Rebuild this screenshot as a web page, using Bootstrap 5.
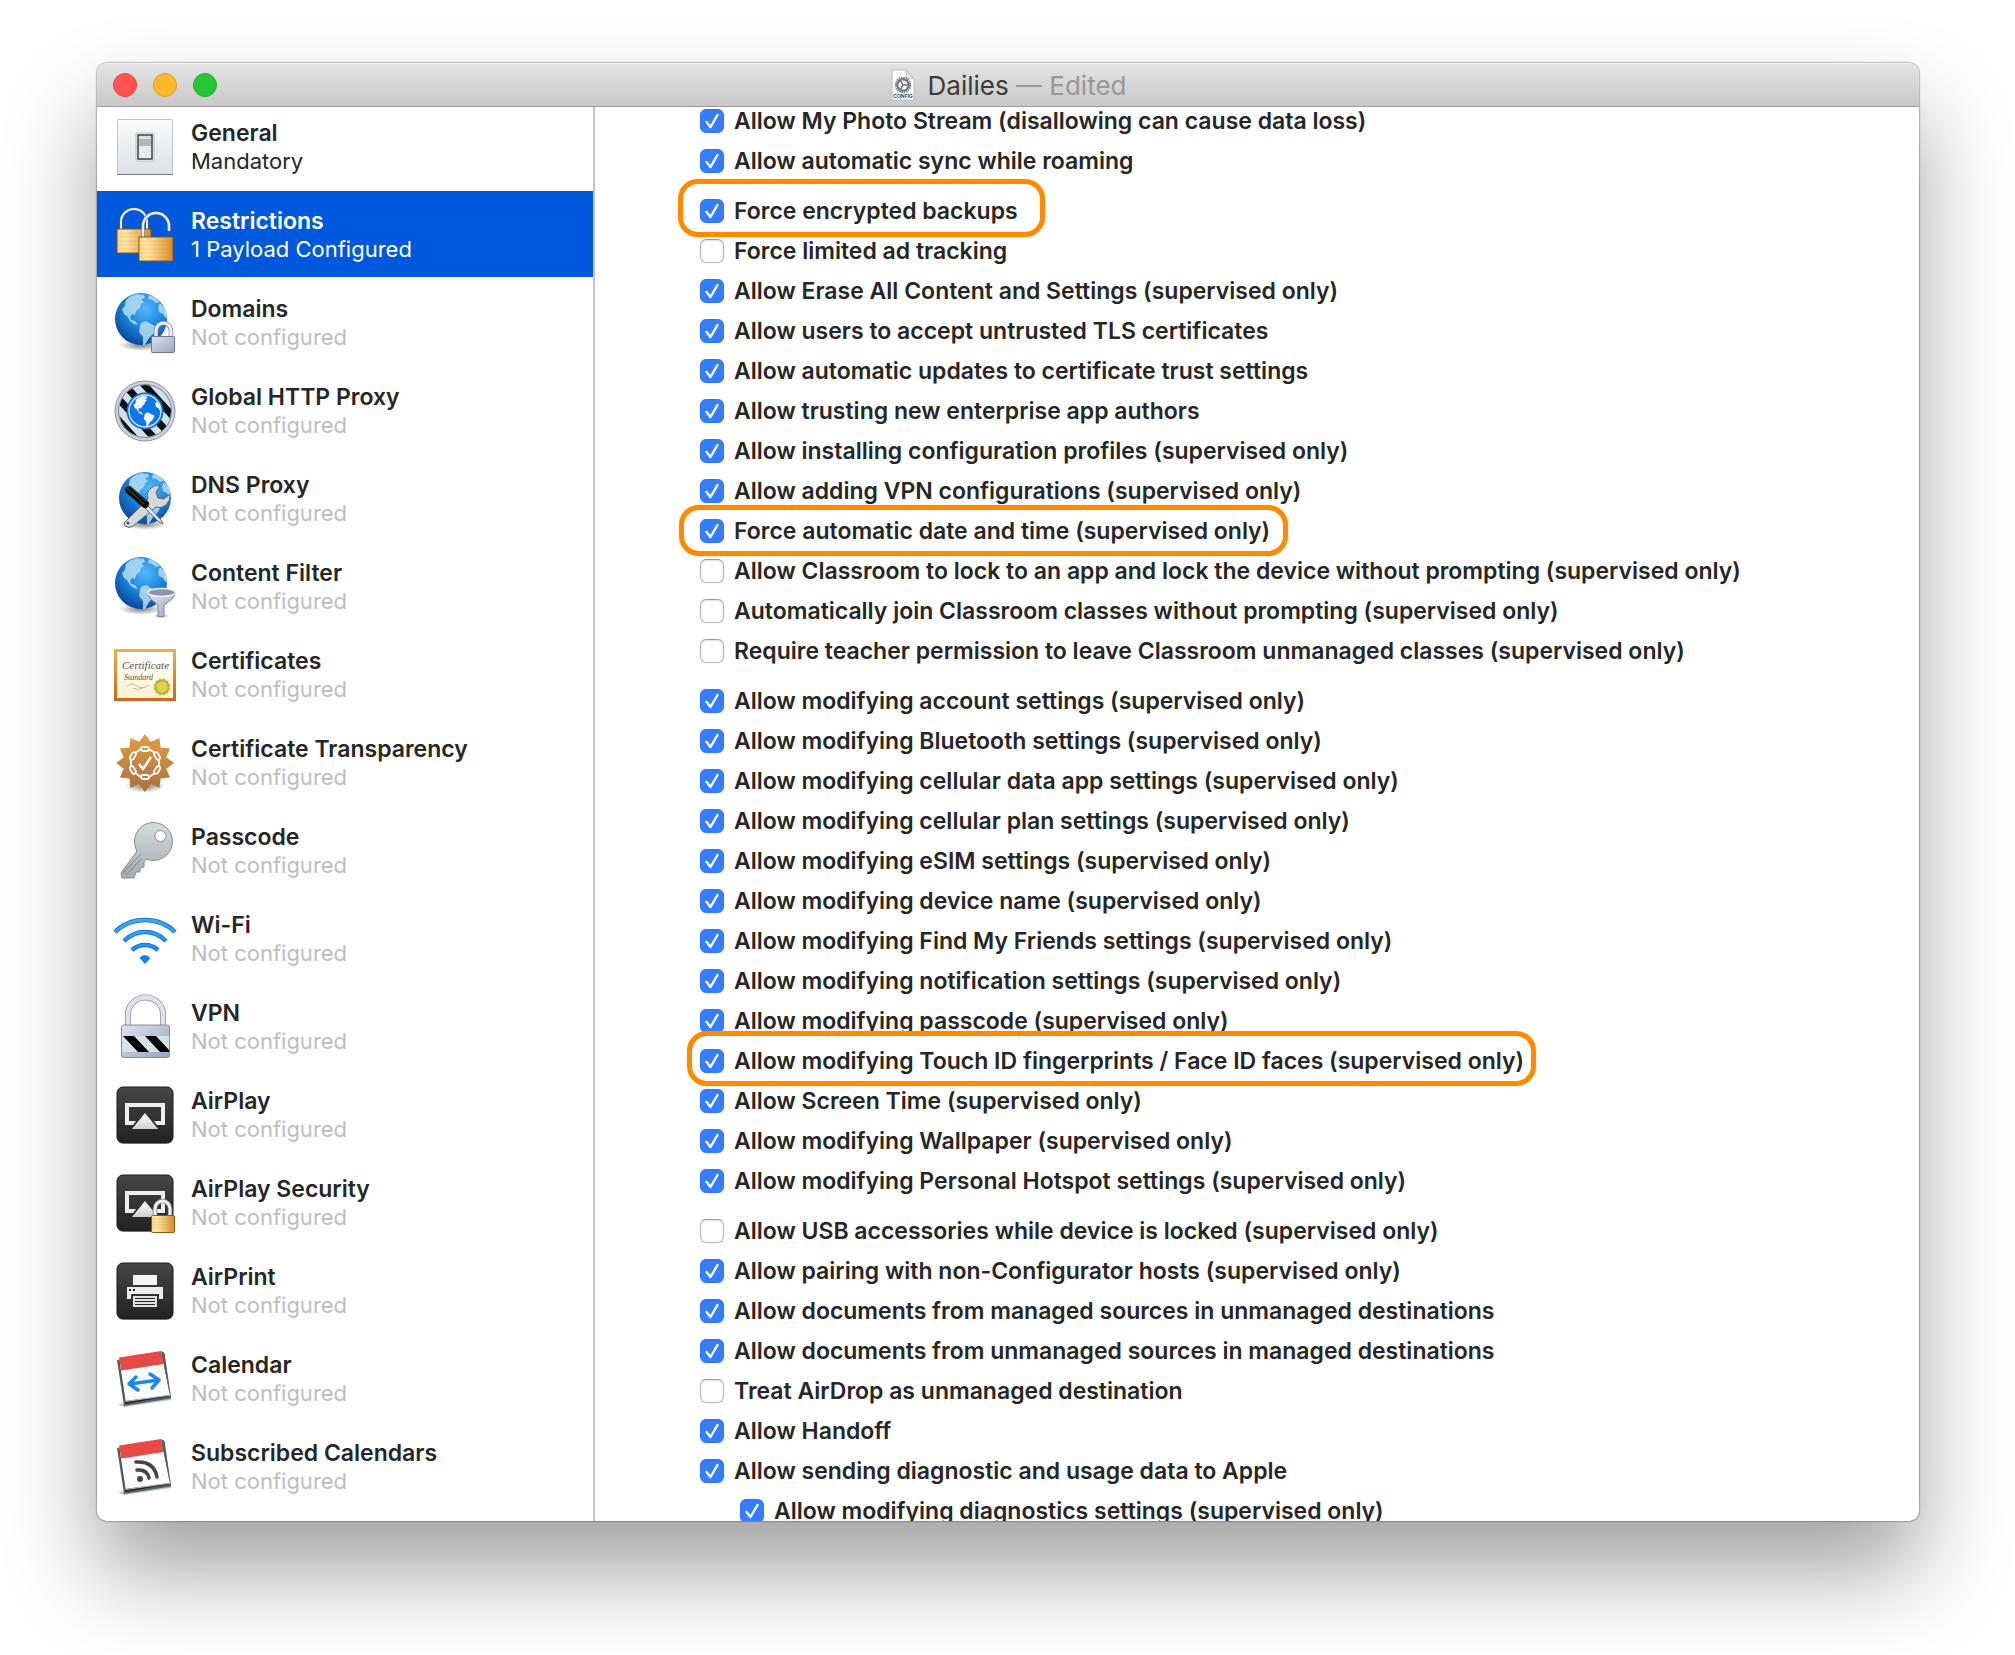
<!DOCTYPE html>
<html lang="en">
<head>
<meta charset="utf-8">
<meta name="viewport" content="width=device-width, initial-scale=1">
<title>Dailies — Edited</title>
<link href="https://cdn.jsdelivr.net/npm/bootstrap@5.3.0/dist/css/bootstrap.min.css" rel="stylesheet">
<style>
  body { font-family: Inter, "Liberation Sans", sans-serif; font-size: 22px; line-height: 28px; color: #262626; background: #fff; padding: 63px 96px 134px 97px; }
  .mac-window { border-radius: 10px; background: #fff; box-shadow: 0 0 1px 1px rgba(0,0,0,.24), 0 50px 90px rgba(0,0,0,.37); }
  .titlebar { height: 44px; background: linear-gradient(#e4e4e4, #c9c9c9); border-bottom: 1px solid #9a9a9a; box-shadow: inset 0 1px #f4f4f4; padding: 0 16px; font-size: 26px; }
  .lights { flex: 1 1 0; gap: 16px; }
  .light { width: 24px; height: 24px; border-radius: 50%; border: 1px solid; padding: 0; }
  .light-close { background: #ff544f; border-color: #e2443f; }
  .light-min { background: #fdb72b; border-color: #df9d20; }
  .light-zoom { background: #27c636; border-color: #1dad2b; }
  .doc-title { gap: 10px; }
  .doc-name { padding-top: 2px; color: #3b3b3b; }
  .doc-state { color: #979797; }
  .sidebar { width: 498px; border-right: 2px solid #c3c3c3; }
  .payloads { margin-top: -4px; gap: 2px; }
  .payload { height: 86px; gap: 14px; padding: 0 16px; color: #262626; text-decoration: none; }
  .payload svg { width: 64px; height: 64px; flex: none; }
  .payload span { padding-top: 2px; }
  .payload small { display: block; font-size: 22px; color: #bdbdbd; }
  .payload b { display: block; font-size: 23px; font-weight: 600; }
  .payload.required small { color: #262626; }
  .payload.current { background: #0058dc; color: #fff; }
  .payload.current small { color: #fff; }
  .options { margin-top: -6px; padding-left: 105px; font-size: 23px; }
  .options li { height: 40px; display: flex; }
  .options .new-group { margin-top: 10px; }
  .options .nested { padding-left: 40px; }
  .options label { position: relative; display: flex; align-items: center; gap: 10px; height: 40px; font-weight: 600; white-space: nowrap; }
  .options .form-check-input { width: 24px; height: 24px; margin: 0; border: 1px solid #b4b4b4; border-top-color: #989898; border-radius: 6px; box-shadow: inset 0 1px 2px rgba(0,0,0,.12); }
  .options .form-check-input:checked { border-color: #2f76f6; background-color: #367dfd; box-shadow: none; background-size: 24px 24px; background-image: url("data:image/svg+xml,%3Csvg xmlns='http://www.w3.org/2000/svg' viewBox='0 0 24 24'%3E%3Cpath d='M6.500 13l4 5L17.500 6' fill='none' stroke='%23fff' stroke-width='2.400' stroke-linecap='round' stroke-linejoin='round'/%3E%3C/svg%3E"); }
  .ringed::after { content: ""; position: absolute; inset: -6px -18px -5px -21px; border: 5px solid #ff8a00; border-radius: 20px; box-shadow: 0 0 1px #ff8a00; pointer-events: none; }
  .ring-tall::after { inset: -12px -27px -6px -22px; }
  .ring-low::after { inset: -10px -12px -5px -13px; }
</style>
<script src="https://cdn.jsdelivr.net/npm/bootstrap@5.3.0/dist/js/bootstrap.bundle.min.js"></script>
</head>
<body class="vh-100 d-flex flex-column overflow-hidden">

<!-- Shared gradients and icon parts -->
<svg width="0" height="0" class="position-absolute" aria-hidden="true">
  <defs>
    <radialGradient id="sea" cx=".58" cy=".3" r=".75"><stop offset="0" stop-color="#55b8fb"/><stop offset=".5" stop-color="#1d84e0"/><stop offset="1" stop-color="#06428f"/></radialGradient>
    <linearGradient id="gold"><stop offset="0" stop-color="#ffd98a"/><stop offset=".25" stop-color="#ffe9a6"/><stop offset="1" stop-color="#dc8a28"/></linearGradient>
    <linearGradient id="steel" x2="1" y2="1"><stop offset="0" stop-color="#dfe4ee"/><stop offset="1" stop-color="#98a4bc"/></linearGradient>
    <linearGradient id="plate" x2="0" y2="1"><stop offset="0" stop-color="#fbfbfd"/><stop offset="1" stop-color="#dde0e5"/></linearGradient>
    <linearGradient id="dark" x2="0" y2="1"><stop offset="0" stop-color="#464646"/><stop offset="1" stop-color="#222"/></linearGradient>
    <linearGradient id="silver" x2="0" y2="1"><stop offset="0" stop-color="#fff"/><stop offset="1" stop-color="#cfcfcf"/></linearGradient>
    <linearGradient id="bronze" gradientUnits="userSpaceOnUse" x1="0" y1="-29" x2="0" y2="29"><stop offset="0" stop-color="#dfa044"/><stop offset="1" stop-color="#ac6e3e"/></linearGradient>
    <linearGradient id="frame" x2="0" y2="1"><stop offset="0" stop-color="#efb04a"/><stop offset="1" stop-color="#cf6420"/></linearGradient>
    <linearGradient id="parchment" x2="0" y2="1"><stop offset="0" stop-color="#fff"/><stop offset="1" stop-color="#fff3cf"/></linearGradient>
    <linearGradient id="keymetal" x2="0" y2="1"><stop offset="0" stop-color="#d5dcdf"/><stop offset="1" stop-color="#a2abae"/></linearGradient>
    <linearGradient id="wave" gradientUnits="userSpaceOnUse" x1="0" y1="12" x2="0" y2="58"><stop offset="0" stop-color="#35aefb"/><stop offset="1" stop-color="#137bf5"/></linearGradient>
    <radialGradient id="shade"><stop offset="0" stop-color="#000" stop-opacity=".5"/><stop offset="1" stop-color="#000" stop-opacity="0"/></radialGradient>
    <g id="land">
      <path d="M-16-13l1-6 5-4 6-2 7 1 1 3-4 1 3 3-3 2-1 4-4 3-1 4-3-1-2 3 1 3 4 1 3 4-4-1-4-3-3-5-3-2-2-5zM8-24l6 2 5 5-4 1-4-3-4-1zM0 4l5-2 5 3 6 3-3 6-5 5-4 7H2l0-8-4-5 1-6zM19-16l4 4 3 8-1 4-3-5-4-2-1-5z" fill="#b5def2" opacity=".85"/>
    </g>
    <g id="globe">
      <ellipse cx="0" cy="26" rx="22" ry="6" fill="url(#shade)"/>
      <circle r="26" fill="url(#sea)"/><use href="#land"/>
    </g>
    <g id="padlock">
      <path d="M4 16V9a7.500 8 0 0 1 15 0v7" fill="none" stroke="#7d8799" stroke-width="4.500"/>
      <path d="M4 16V9a7.500 8 0 0 1 15 0v7" fill="none" stroke="#eceef4" stroke-width="3"/>
    </g>
    <g id="screen">
      <rect x="4" y="6" width="56" height="56" rx="6" fill="#000" opacity=".2"/>
      <rect x="4" y="5" width="56" height="56" rx="6" fill="url(#dark)" stroke="#1b1b1b"/>
    </g>
    <g id="mirror">
      <path d="M12 21h40v22h-8l-3-4h7V25H16v14h7l-3 4h-8z" fill="#efefef"/>
      <path d="M32 31L45 47H19z" fill="url(#silver)"/>
    </g>
    <g id="calendar">
      <path d="M5 58l6 3 47-7v-2z" fill="#000" opacity=".25"/>
      <path d="M4 14L51 6.500 58 52.500 11 60z" fill="#50606a"/>
      <path d="M6 14L49 8l8 42-44.500 8z" fill="#23282b"/>
      <path d="M6 11.500L48 5l9 44-44.500 6z" fill="#fbfbfb"/>
      <path d="M48 5l3.500 2 6.500 45-1-3z" fill="#50606a"/>
      <path d="M6 11.500L48 5l2.700 13L8.300 24.500z" fill="#e74a46"/>
      <path d="M12.500 55.500l45-6.500" stroke="#b9bdbd" fill="none"/>
    </g>
  </defs>
</svg>

<main class="mac-window flex-fill d-flex flex-column overflow-hidden">
  <header class="titlebar d-flex align-items-center flex-shrink-0">
    <div class="lights d-flex">
      <button class="light light-close" type="button" aria-label="Close"></button>
      <button class="light light-min" type="button" aria-label="Minimize"></button>
      <button class="light light-zoom" type="button" aria-label="Zoom"></button>
    </div>
    <div class="doc-title d-flex align-items-center">
      <svg width="28" height="34" viewBox="0 0 28 34" aria-hidden="true">
        <path d="M2 2h14l8 9v21H2z" fill="#fff" stroke="#bcbcbc"/><path d="M16 2v0q1 7 0 9 4-1 8 0z" fill="#e4e4e4" stroke="#c4c4c4"/>
        <circle cx="13" cy="17" r="7" fill="none" stroke="#747a7a" stroke-width="2.500" stroke-dasharray="1.500 .7"/>
        <circle cx="13" cy="17" r="5.500" fill="none" stroke="#747a7a" stroke-width="2"/>
        <path d="M13 17h6M13 17l-3-5M13 17l-3 5" stroke="#747a7a" stroke-width="1.500"/>
        <text x="13" y="30" text-anchor="middle" font-size="5" font-weight="700" font-family="Inter, sans-serif" fill="#444">CONFIG</text>
      </svg>
      <span class="doc-name">Dailies <span class="doc-state">— Edited</span></span>
    </div>
    <div class="lights"></div>
  </header>

  <div class="d-flex flex-fill overflow-hidden">
    <nav class="sidebar flex-shrink-0 overflow-hidden" aria-label="Payloads">
      <div class="payloads d-flex flex-column">
        <a class="payload required d-flex align-items-center" href="#">
          <svg viewBox="0 0 64 64"><rect x="4.500" y="5.500" width="55" height="55" rx="1" fill="url(#plate)" stroke="#bfc2c8"/><path d="M4 60.500h56" stroke="#767b82"/><rect x="23" y="19" width="18" height="28" rx="1" fill="#fff" stroke="#b8b8b8"/><rect x="25" y="21" width="14" height="24" fill="#e6e9ee" stroke="#3b3d42" stroke-width="1.500"/><path d="M26 22h12v3H26z" fill="#dcdde0"/><path d="M26 25h12v7H26z" fill="#b4b6ba"/></svg>
          <span><b>General</b><small>Mandatory</small></span></a>
        <a class="payload current d-flex align-items-center" href="#" aria-current="page">
          <svg viewBox="0 0 64 64"><g fill="none"><path d="M8 28V20a13 13 0 0 1 26 0v8" stroke="#5b6679" stroke-width="3"/><path d="M8 28V20a13 13 0 0 1 26 0v8" stroke="#e8edf5" stroke-width="2"/></g><rect x="4" y="27" width="34" height="24" fill="url(#gold)" stroke="#865018"/><path d="M5 31h32M5 35h32M5 39h32M5 43h32M5 47h32" stroke="#d18a34" opacity=".3"/><path d="M30 36V24a13 13 0 0 1 26 0v5" fill="none" stroke="#5b6679" stroke-width="3.500"/><path d="M30 36V24a13 13 0 0 1 26 0v5" fill="none" stroke="#e8edf5" stroke-width="2.500"/><rect x="26" y="35" width="34" height="24" fill="url(#gold)" stroke="#865018"/><path d="M27 39h32M27 43h32M27 47h32M27 51h32M27 55h32" stroke="#d18a34" opacity=".3"/></svg>
          <span><b>Restrictions</b><small>1 Payload Configured</small></span></a>
        <a class="payload d-flex align-items-center" href="#">
          <svg viewBox="0 0 64 64"><use href="#globe" x="28" y="29"/><use href="#padlock" x="39" y="32"/><rect x="38.500" y="46.500" width="23" height="16" rx="1" fill="url(#steel)" stroke="#6d7890"/></svg>
          <span><b>Domains</b><small>Not configured</small></span></a>
        <a class="payload d-flex align-items-center" href="#">
          <svg viewBox="0 0 64 64"><circle cx="32" cy="33" r="30" fill="#ccd0de" stroke="#8c93a8"/><clipPath id="porthole"><circle cx="32" cy="33" r="26"/></clipPath><g clip-path="url(#porthole)"><path d="M0 0h64v64H0z" fill="#d3e2e4"/><path d="M-8 6L52 72M8 3L68 69M25 0L85 66M-22 12L38 78" stroke="#0b1113" stroke-width="7"/></g><circle cx="32" cy="33" r="26.500" fill="none" stroke="#7d859a"/><circle cx="32" cy="33" r="18.500" fill="#0a6be2"/><circle cx="32" cy="33" r="16" fill="#0d76e8" stroke="#d7ecff" stroke-width="1.300"/><g transform="translate(32 33) scale(.6)"><path d="M-16-13l1-6 5-4 6-2 7 1 1 3-4 1 3 3-3 2-1 4-4 3-1 4-3-1-2 3 1 3 4 1 3 4-4-1-4-3-3-5-3-2-2-5zM0 4l5-2 5 3 6 3-3 6-5 5-4 7H2l0-8-4-5 1-6zM19-16l4 4 3 8-1 4-3-5-4-2-1-5z" fill="#f1faff"/></g></svg>
          <span><b>Global HTTP Proxy</b><small>Not configured</small></span></a>
        <a class="payload d-flex align-items-center" href="#">
          <svg viewBox="0 0 64 64"><use href="#globe" x="32" y="32"/><path d="M12 56L35 33q-2-7 3-11 4-4 9-2l-4 6 2 6 6 1 6-5q1 6-4 11-5 4-10 2L20 60q-4 3-8 0-2-2 0-4z" fill="#d3d9d9" stroke="#5c6566"/><circle cx="15" cy="57" r="1.500" fill="#505759"/><path d="M34 39l14 15 2 4-4-2-14-14z" fill="#e4e8e8" stroke="#676f70"/><path d="M16 24l16 14" stroke="#111" stroke-width="8" stroke-linecap="round"/><path d="M14 22l17 16M18 21l15 14" stroke="#4a4a4a"/></svg>
          <span><b>DNS Proxy</b><small>Not configured</small></span></a>
        <a class="payload d-flex align-items-center" href="#">
          <svg viewBox="0 0 64 64"><use href="#globe" x="28" y="29"/><ellipse cx="48" cy="62" rx="8" ry="2" fill="url(#shade)"/><path d="M34 39q3 7 11 12v11q3 2 6 0V51q9-5 12-12z" fill="url(#steel)" stroke="#7a8498"/><ellipse cx="48.500" cy="38.500" rx="14" ry="4" fill="#8995aa" stroke="#edf0f6" stroke-width="1.500"/></svg>
          <span><b>Content Filter</b><small>Not configured</small></span></a>
        <a class="payload d-flex align-items-center" href="#">
          <svg viewBox="0 0 64 64"><rect x="1" y="7" width="62" height="52" fill="url(#frame)"/><rect x="4" y="10" width="56" height="46" fill="url(#parchment)"/><g font-family="'Liberation Serif', serif" font-style="italic" fill="#555"><text x="9" y="27" font-size="11">Certificate</text><text x="11" y="38" font-size="8">Standard</text></g><path d="M14 44q5-4 10 0t12-1M20 46q5 3 9 0" fill="none" stroke="#a9a58f" stroke-width=".8"/><g fill="#c9b932" stroke="#b3a021" stroke-width=".5"><path d="M43 39h12v12H43z"/><path d="M43 39h12v12H43z" transform="rotate(30 49 45)"/><path d="M43 39h12v12H43z" transform="rotate(60 49 45)"/></g><circle cx="49" cy="45" r="5.500" fill="#ded159"/></svg>
          <span><b>Certificates</b><small>Not configured</small></span></a>
        <a class="payload d-flex align-items-center" href="#">
          <svg viewBox="0 0 64 64"><g transform="translate(32 33)"><ellipse cx="0" cy="23" rx="20" ry="7" fill="url(#shade)"/><path d="M0-29L5.700-21.300 14.500-25.100 15.600-15.600 25.100-14.500 21.300-5.700 29 0 21.300 5.700 25.100 14.500 15.600 15.600 14.500 25.100 5.700 21.300 0 29-5.700 21.300-14.500 25.100-15.600 15.600-25.100 14.500-21.300 5.700-29 0-21.300-5.700-25.100-14.500-15.600-15.600-14.500-25.100-5.700-21.300z" fill="url(#bronze)"/><g fill="none" stroke="#fff" stroke-width="1.800"><g id="link"><rect x="-4" y="-16" width="8" height="4" rx="2"/><rect x="-4" y="12" width="8" height="4" rx="2"/></g><use href="#link" transform="rotate(60)"/><use href="#link" transform="rotate(120)"/><path d="M4-14l6 4M14-3v6M10 10l-6 4M-4 14l-6-4M-14 3v-6M-10-10l6-4"/><path d="M-6 1l4 5L6-6" stroke-width="2.500"/></g></g></svg>
          <span><b>Certificate Transparency</b><small>Not configured</small></span></a>
        <a class="payload d-flex align-items-center" href="#">
          <svg viewBox="0 0 64 64"><path fill-rule="evenodd" d="M24 33A19 19 0 1 1 33 41L31 44v5l-4 1v4h-4l-2 6H9l-1-5zM47.500 12.500a5.500 5.500 0 1 0 .01 0z" fill="url(#keymetal)" stroke="#868e91"/><path d="M10 55L28 36M13 57l16-17" stroke="#7d868a"/></svg>
          <span><b>Passcode</b><small>Not configured</small></span></a>
        <a class="payload d-flex align-items-center" href="#">
          <svg viewBox="0 0 64 64"><g fill="none" stroke="#1366b4" stroke-width="4.500"><path d="M2 26Q14 14 32 14T62 26M11 35Q20 26 32 26T53 35M19 44Q25 39 32 39T45 44"/></g><g fill="none" stroke="url(#wave)" stroke-width="3"><path d="M2 26Q14 14 32 14T62 26M11 35Q20 26 32 26T53 35M19 44Q25 39 32 39T45 44"/></g><path d="M26.500 52q5-6 11 0L32 58z" fill="#147df2"/></svg>
          <span><b>Wi-Fi</b><small>Not configured</small></span></a>
        <a class="payload d-flex align-items-center" href="#">
          <svg viewBox="0 0 64 64"><path d="M15 31V20a17 16 0 0 1 35 0v11" fill="none" stroke="#8992a6" stroke-width="6"/><path d="M15 31V20a17 16 0 0 1 35 0v11" fill="none" stroke="#dfe2eb" stroke-width="4.500"/><rect x="8.500" y="31" width="48" height="32.500" rx="2" fill="url(#steel)" stroke="#828da3"/><path d="M9 42h47v16H9z" fill="#d4e4e6"/><path d="M10 42h11l15 16H25zM32 42h11l13 14v2h-9z" fill="#000"/></svg>
          <span><b>VPN</b><small>Not configured</small></span></a>
        <a class="payload d-flex align-items-center" href="#">
          <svg viewBox="0 0 64 64"><use href="#screen"/><use href="#mirror"/></svg>
          <span><b>AirPlay</b><small>Not configured</small></span></a>
        <a class="payload d-flex align-items-center" href="#">
          <svg viewBox="0 0 64 64"><use href="#screen"/><use href="#mirror"/><use href="#padlock" x="38" y="30"/><rect x="38.500" y="45.500" width="23" height="17" rx="1" fill="url(#gold)" stroke="#8b5a1e"/><path d="M39 49h22M39 52h22M39 55h22M39 58h22" stroke="#d0923d" opacity=".3"/></svg>
          <span><b>AirPlay Security</b><small>Not configured</small></span></a>
        <a class="payload d-flex align-items-center" href="#">
          <svg viewBox="0 0 64 64"><use href="#screen"/><path d="M20 17h24v10H20z" fill="#f4f4f4"/><path d="M14 29h36v12h-4v-5H18v5h-4z" fill="#ececec"/><path d="M16 31h2v2h-2zM20 31h2v2h-2z" fill="#222"/><path d="M20 38h24v11H20z" fill="#e2e2e2"/><path d="M22 40.500h20M22 43.500h20M22 46.500h20" stroke="#222"/></svg>
          <span><b>AirPrint</b><small>Not configured</small></span></a>
        <a class="payload d-flex align-items-center" href="#">
          <svg viewBox="0 0 64 64"><use href="#calendar"/><path d="M17 38l28-4M23 31l-7 7 9 6M37 28l9 6-7 8" fill="none" stroke="#1b88ec" stroke-width="3.500" stroke-linecap="round" stroke-linejoin="round"/></svg>
          <span><b>Calendar</b><small>Not configured</small></span></a>
        <a class="payload d-flex align-items-center" href="#">
          <svg viewBox="0 0 64 64"><use href="#calendar"/><circle cx="27" cy="45" r="3" fill="#454545"/><path d="M24 36q10-1 12 8M23 28q18-1 21 15" fill="none" stroke="#454545" stroke-width="3.500" stroke-linecap="round"/></svg>
          <span><b>Subscribed Calendars</b><small>Not configured</small></span></a>
      </div>
    </nav>

    <section class="flex-fill overflow-hidden" aria-label="Restrictions">
      <ul class="options list-unstyled mb-0">
        <li><label><input class="form-check-input" type="checkbox" checked>Allow My Photo Stream (disallowing can cause data loss)</label></li>
        <li><label><input class="form-check-input" type="checkbox" checked>Allow automatic sync while roaming</label></li>
        <li class="new-group"><label class="ringed ring-tall"><input class="form-check-input" type="checkbox" checked>Force encrypted backups</label></li>
        <li><label><input class="form-check-input" type="checkbox">Force limited ad tracking</label></li>
        <li><label><input class="form-check-input" type="checkbox" checked>Allow Erase All Content and Settings (supervised only)</label></li>
        <li><label><input class="form-check-input" type="checkbox" checked>Allow users to accept untrusted TLS certificates</label></li>
        <li><label><input class="form-check-input" type="checkbox" checked>Allow automatic updates to certificate trust settings</label></li>
        <li><label><input class="form-check-input" type="checkbox" checked>Allow trusting new enterprise app authors</label></li>
        <li><label><input class="form-check-input" type="checkbox" checked>Allow installing configuration profiles (supervised only)</label></li>
        <li><label><input class="form-check-input" type="checkbox" checked>Allow adding VPN configurations (supervised only)</label></li>
        <li><label class="ringed"><input class="form-check-input" type="checkbox" checked>Force automatic date and time (supervised only)</label></li>
        <li><label><input class="form-check-input" type="checkbox">Allow Classroom to lock to an app and lock the device without prompting (supervised only)</label></li>
        <li><label><input class="form-check-input" type="checkbox">Automatically join Classroom classes without prompting (supervised only)</label></li>
        <li><label><input class="form-check-input" type="checkbox">Require teacher permission to leave Classroom unmanaged classes (supervised only)</label></li>
        <li class="new-group"><label><input class="form-check-input" type="checkbox" checked>Allow modifying account settings (supervised only)</label></li>
        <li><label><input class="form-check-input" type="checkbox" checked>Allow modifying Bluetooth settings (supervised only)</label></li>
        <li><label><input class="form-check-input" type="checkbox" checked>Allow modifying cellular data app settings (supervised only)</label></li>
        <li><label><input class="form-check-input" type="checkbox" checked>Allow modifying cellular plan settings (supervised only)</label></li>
        <li><label><input class="form-check-input" type="checkbox" checked>Allow modifying eSIM settings (supervised only)</label></li>
        <li><label><input class="form-check-input" type="checkbox" checked>Allow modifying device name (supervised only)</label></li>
        <li><label><input class="form-check-input" type="checkbox" checked>Allow modifying Find My Friends settings (supervised only)</label></li>
        <li><label><input class="form-check-input" type="checkbox" checked>Allow modifying notification settings (supervised only)</label></li>
        <li><label><input class="form-check-input" type="checkbox" checked>Allow modifying passcode (supervised only)</label></li>
        <li><label class="ringed ring-low"><input class="form-check-input" type="checkbox" checked>Allow modifying Touch ID fingerprints / Face ID faces (supervised only)</label></li>
        <li><label><input class="form-check-input" type="checkbox" checked>Allow Screen Time (supervised only)</label></li>
        <li><label><input class="form-check-input" type="checkbox" checked>Allow modifying Wallpaper (supervised only)</label></li>
        <li><label><input class="form-check-input" type="checkbox" checked>Allow modifying Personal Hotspot settings (supervised only)</label></li>
        <li class="new-group"><label><input class="form-check-input" type="checkbox">Allow USB accessories while device is locked (supervised only)</label></li>
        <li><label><input class="form-check-input" type="checkbox" checked>Allow pairing with non-Configurator hosts (supervised only)</label></li>
        <li><label><input class="form-check-input" type="checkbox" checked>Allow documents from managed sources in unmanaged destinations</label></li>
        <li><label><input class="form-check-input" type="checkbox" checked>Allow documents from unmanaged sources in managed destinations</label></li>
        <li><label><input class="form-check-input" type="checkbox">Treat AirDrop as unmanaged destination</label></li>
        <li><label><input class="form-check-input" type="checkbox" checked>Allow Handoff</label></li>
        <li><label><input class="form-check-input" type="checkbox" checked>Allow sending diagnostic and usage data to Apple</label></li>
        <li class="nested"><label><input class="form-check-input" type="checkbox" checked>Allow modifying diagnostics settings (supervised only)</label></li>
      </ul>
    </section>
  </div>
</main>
</body>
</html>
